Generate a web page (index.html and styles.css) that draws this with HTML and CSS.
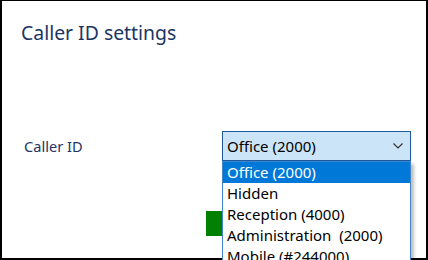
FILE: index.html
```html
<!DOCTYPE html>
<html lang="en">
<head>
  <meta charset="UTF-8">
  <title>Caller ID settings</title>
  <link rel="stylesheet" href="styles.css">
</head>
<body>
  <div class="window">
    <h1 class="title">Caller ID settings</h1>
    <div class="row">
      <label class="field-label">Caller ID</label>
      <div class="select">
        <span>Office (2000)</span>
        <svg class="chevron" width="10" height="6" viewBox="0 0 10 6"><path d="M0.5 0.5 L5 5 L9.5 0.5" fill="none" stroke="#333" stroke-width="1.2"/></svg>
      </div>
    </div>
    <div class="buttons">
      <button class="save-btn"></button>
    </div>
    <ul class="options">
      <li class="selected">Office (2000)</li>
      <li>Hidden</li>
      <li>Reception (4000)</li>
      <li>Administration &nbsp;(2000)</li>
      <li>Mobile (#244000)</li>
    </ul>
  </div>
</body>
</html>
```

FILE: styles.css
```css
html, body {
  overflow: hidden;
}
body {
  margin: 0;
  font-family: 'Noto Sans', 'Open Sans', sans-serif;
  background: #fff;
}
.window {
  position: relative;
  width: 428px;
  height: 260px;
  box-sizing: border-box;
  border: 2px solid #000;
  border-top-width: 1px;
}
.title {
  margin: 0;
  padding: 19px 0 0 19px;
  font-size: 19.4px;
  font-weight: normal;
  color: #1c3564;
  line-height: 26px;
}
.row {
  display: flex;
  align-items: center;
  margin-top: 85px;
  padding-left: 22px;
}
.field-label {
  width: 198px;
  font-size: 14.6px;
  color: #1c3564;
}
.select {
  display: flex;
  align-items: center;
  justify-content: space-between;
  width: 189px;
  height: 30px;
  box-sizing: border-box;
  padding: 0 7px 0 4px;
  background: #cce4f7;
  border: 1px solid #1f5a9c;
  font-size: 15px;
  color: #000;
}
.buttons {
  padding: 50px 0 0 204px;
}
.save-btn {
  width: 70px;
  height: 25px;
  border: none;
  background: #008000;
}
.options {
  position: absolute;
  left: 220px;
  top: 160px;
  width: 189px;
  margin: 0;
  padding: 0;
  list-style: none;
  box-sizing: border-box;
  border: 1px solid #3f86cc;
  background: #fff;
  box-shadow: 3px 3px 3px rgba(0, 0, 0, 0.25);
  font-size: 15px;
}
.options li {
  height: 21px;
  line-height: 21px;
  padding-left: 4px;
  color: #000;
  white-space: pre;
}
.options li.selected {
  background: #0078d7;
  color: #fff;
}
```
